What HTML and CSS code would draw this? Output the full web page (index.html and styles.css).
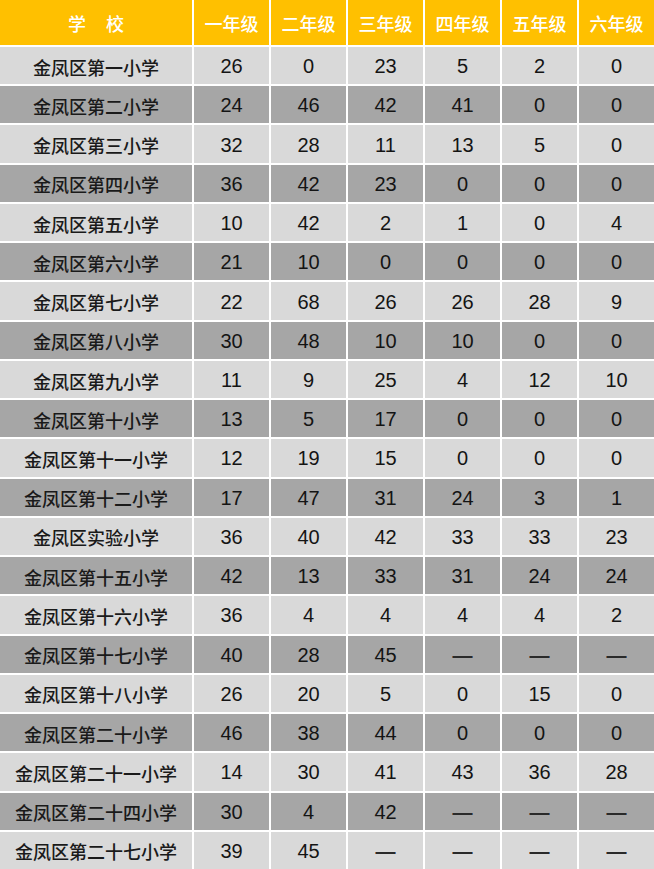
FILE: index.html
```html
<!DOCTYPE html>
<html lang="zh-CN">
<head>
<meta charset="utf-8">
<title>金凤区小学各年级</title>
<link rel="stylesheet" href="styles.css">
</head>
<body>
<div class="table">
  <div class="cell head school">学 校</div>
  <div class="cell head">一年级</div>
  <div class="cell head">二年级</div>
  <div class="cell head">三年级</div>
  <div class="cell head">四年级</div>
  <div class="cell head">五年级</div>
  <div class="cell head">六年级</div>

  <div class="cell l n">金凤区第一小学</div><div class="cell l">26</div><div class="cell l">0</div><div class="cell l">23</div><div class="cell l">5</div><div class="cell l">2</div><div class="cell l">0</div>
  <div class="cell d n">金凤区第二小学</div><div class="cell d">24</div><div class="cell d">46</div><div class="cell d">42</div><div class="cell d">41</div><div class="cell d">0</div><div class="cell d">0</div>
  <div class="cell l n">金凤区第三小学</div><div class="cell l">32</div><div class="cell l">28</div><div class="cell l">11</div><div class="cell l">13</div><div class="cell l">5</div><div class="cell l">0</div>
  <div class="cell d n">金凤区第四小学</div><div class="cell d">36</div><div class="cell d">42</div><div class="cell d">23</div><div class="cell d">0</div><div class="cell d">0</div><div class="cell d">0</div>
  <div class="cell l n">金凤区第五小学</div><div class="cell l">10</div><div class="cell l">42</div><div class="cell l">2</div><div class="cell l">1</div><div class="cell l">0</div><div class="cell l">4</div>
  <div class="cell d n">金凤区第六小学</div><div class="cell d">21</div><div class="cell d">10</div><div class="cell d">0</div><div class="cell d">0</div><div class="cell d">0</div><div class="cell d">0</div>
  <div class="cell l n">金凤区第七小学</div><div class="cell l">22</div><div class="cell l">68</div><div class="cell l">26</div><div class="cell l">26</div><div class="cell l">28</div><div class="cell l">9</div>
  <div class="cell d n">金凤区第八小学</div><div class="cell d">30</div><div class="cell d">48</div><div class="cell d">10</div><div class="cell d">10</div><div class="cell d">0</div><div class="cell d">0</div>
  <div class="cell l n">金凤区第九小学</div><div class="cell l">11</div><div class="cell l">9</div><div class="cell l">25</div><div class="cell l">4</div><div class="cell l">12</div><div class="cell l">10</div>
  <div class="cell d n">金凤区第十小学</div><div class="cell d">13</div><div class="cell d">5</div><div class="cell d">17</div><div class="cell d">0</div><div class="cell d">0</div><div class="cell d">0</div>
  <div class="cell l n">金凤区第十一小学</div><div class="cell l">12</div><div class="cell l">19</div><div class="cell l">15</div><div class="cell l">0</div><div class="cell l">0</div><div class="cell l">0</div>
  <div class="cell d n">金凤区第十二小学</div><div class="cell d">17</div><div class="cell d">47</div><div class="cell d">31</div><div class="cell d">24</div><div class="cell d">3</div><div class="cell d">1</div>
  <div class="cell l n">金凤区实验小学</div><div class="cell l">36</div><div class="cell l">40</div><div class="cell l">42</div><div class="cell l">33</div><div class="cell l">33</div><div class="cell l">23</div>
  <div class="cell d n">金凤区第十五小学</div><div class="cell d">42</div><div class="cell d">13</div><div class="cell d">33</div><div class="cell d">31</div><div class="cell d">24</div><div class="cell d">24</div>
  <div class="cell l n">金凤区第十六小学</div><div class="cell l">36</div><div class="cell l">4</div><div class="cell l">4</div><div class="cell l">4</div><div class="cell l">4</div><div class="cell l">2</div>
  <div class="cell d n">金凤区第十七小学</div><div class="cell d">40</div><div class="cell d">28</div><div class="cell d">45</div><div class="cell d x">—</div><div class="cell d x">—</div><div class="cell d x">—</div>
  <div class="cell l n">金凤区第十八小学</div><div class="cell l">26</div><div class="cell l">20</div><div class="cell l">5</div><div class="cell l">0</div><div class="cell l">15</div><div class="cell l">0</div>
  <div class="cell d n">金凤区第二十小学</div><div class="cell d">46</div><div class="cell d">38</div><div class="cell d">44</div><div class="cell d">0</div><div class="cell d">0</div><div class="cell d">0</div>
  <div class="cell l n">金凤区第二十一小学</div><div class="cell l">14</div><div class="cell l">30</div><div class="cell l">41</div><div class="cell l">43</div><div class="cell l">36</div><div class="cell l">28</div>
  <div class="cell d n">金凤区第二十四小学</div><div class="cell d">30</div><div class="cell d">4</div><div class="cell d">42</div><div class="cell d x">—</div><div class="cell d x">—</div><div class="cell d x">—</div>
  <div class="cell l n">金凤区第二十七小学</div><div class="cell l">39</div><div class="cell l">45</div><div class="cell l x">—</div><div class="cell l x">—</div><div class="cell l x">—</div><div class="cell l x">—</div>
</div>
</body>
</html>
```

FILE: styles.css
```css
html, body {
  margin: 0;
  padding: 0;
  background: #ffffff;
}

.table {
  display: grid;
  grid-template-columns: 192px repeat(6, 1fr);
  grid-template-rows: 45px repeat(21, 1fr);
  gap: 2px;
  width: 654px;
  height: 869px;
  background: #ffffff;
  font-family: "Liberation Sans", "Noto Sans CJK SC", sans-serif;
  font-size: 20px;
  color: #141414;
}

.cell {
  display: flex;
  align-items: center;
  justify-content: center;
  white-space: nowrap;
  padding-top: 2px;
}

.head {
  background: #ffc000;
  color: #ffffff;
  font-family: "Noto Sans CJK SC", sans-serif;
  font-size: 18px;
  font-weight: 500;
  padding-top: 0;
}

.school {
  word-spacing: 16px;
}

.n {
  font-family: "Noto Sans CJK SC", sans-serif;
  font-size: 18px;
  font-weight: 500;
  color: #1a1a1a;
}

.x {
  font-weight: 700;
  color: #2a2a2a;
}

.l {
  background: #d9d9d9;
}

.d {
  background: #a6a6a6;
}
```
